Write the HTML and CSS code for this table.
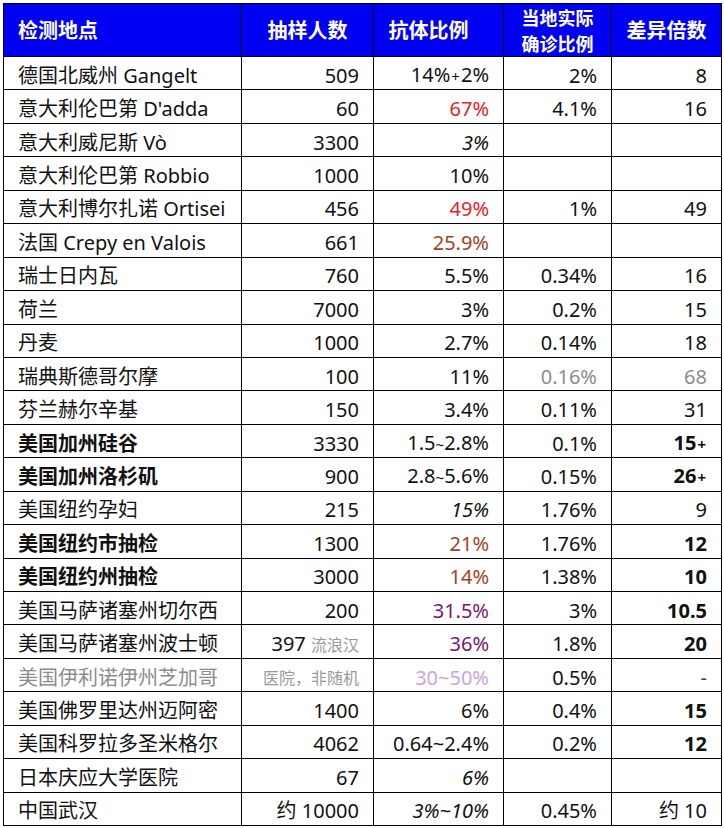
FILE: index.html
```html
<!DOCTYPE html>
<html lang="zh-CN">
<head>
<meta charset="utf-8">
<title>抗体检测</title>
<link rel="stylesheet" href="styles.css">
</head>
<body>
<table class="data">
  <colgroup>
    <col class="c1"><col class="c2"><col class="c3"><col class="c4"><col class="c5">
  </colgroup>
  <thead>
    <tr>
      <th class="left">检测地点</th>
      <th>抽样人数</th>
      <th class="shift">抗体比例</th>
      <th class="two">当地实际<br>确诊比例</th>
      <th>差异倍数</th>
    </tr>
  </thead>
  <tbody>
    <tr><td>德国北威州 Gangelt</td><td>509</td><td>14%<span class="plus">+</span>2%</td><td>2%</td><td>8</td></tr>
    <tr><td>意大利伦巴第 D'adda</td><td>60</td><td class="red">67%</td><td>4.1%</td><td>16</td></tr>
    <tr><td>意大利威尼斯 Vò</td><td>3300</td><td class="it">3%</td><td></td><td></td></tr>
    <tr><td>意大利伦巴第 Robbio</td><td>1000</td><td>10%</td><td></td><td></td></tr>
    <tr><td>意大利博尔扎诺 Ortisei</td><td>456</td><td class="red">49%</td><td>1%</td><td>49</td></tr>
    <tr><td>法国 Crepy en Valois</td><td>661</td><td class="brown">25.9%</td><td></td><td></td></tr>
    <tr><td>瑞士日内瓦</td><td>760</td><td>5.5%</td><td>0.34%</td><td>16</td></tr>
    <tr><td>荷兰</td><td>7000</td><td>3%</td><td>0.2%</td><td>15</td></tr>
    <tr><td>丹麦</td><td>1000</td><td>2.7%</td><td>0.14%</td><td>18</td></tr>
    <tr><td>瑞典斯德哥尔摩</td><td>100</td><td>11%</td><td class="gray">0.16%</td><td class="gray">68</td></tr>
    <tr><td>芬兰赫尔辛基</td><td>150</td><td>3.4%</td><td>0.11%</td><td>31</td></tr>
    <tr><td class="b">美国加州硅谷</td><td>3330</td><td>1.5<span class="tl">~</span>2.8%</td><td>0.1%</td><td class="b">15<span class="plus">+</span></td></tr>
    <tr><td class="b">美国加州洛杉矶</td><td>900</td><td>2.8<span class="tl">~</span>5.6%</td><td>0.15%</td><td class="b">26<span class="plus">+</span></td></tr>
    <tr><td>美国纽约孕妇</td><td>215</td><td class="it">15%</td><td>1.76%</td><td>9</td></tr>
    <tr><td class="b">美国纽约市抽检</td><td>1300</td><td class="brown">21%</td><td>1.76%</td><td class="b">12</td></tr>
    <tr><td class="b">美国纽约州抽检</td><td>3000</td><td class="brown">14%</td><td>1.38%</td><td class="b">10</td></tr>
    <tr><td>美国马萨诸塞州切尔西</td><td>200</td><td class="purple">31.5%</td><td>3%</td><td class="b">10.5</td></tr>
    <tr><td>美国马萨诸塞州波士顿</td><td>397 <span class="note">流浪汉</span></td><td class="purple">36%</td><td>1.8%</td><td class="b">20</td></tr>
    <tr><td class="gray">美国伊利诺伊州芝加哥</td><td><span class="note">医院，非随机</span></td><td class="lilac">30~50%</td><td>0.5%</td><td class="dash">-</td></tr>
    <tr><td>美国佛罗里达州迈阿密</td><td>1400</td><td>6%</td><td>0.4%</td><td class="b">15</td></tr>
    <tr><td>美国科罗拉多圣米格尔</td><td>4062</td><td>0.64~2.4%</td><td>0.2%</td><td class="b">12</td></tr>
    <tr><td>日本庆应大学医院</td><td>67</td><td class="it">6%</td><td></td><td></td></tr>
    <tr><td>中国武汉</td><td>约 10000</td><td class="it">3%~10%</td><td>0.45%</td><td>约 10</td></tr>
  </tbody>
</table>
</body>
</html>
```

FILE: styles.css
```css
html, body {
  margin: 0;
  padding: 0;
  background: #ffffff;
}

body {
  padding: 3px 0 0 3px;
  font-family: "Noto Sans", "Noto Sans CJK SC", sans-serif;
  color: #111111;
}

.data {
  border-collapse: collapse;
  table-layout: fixed;
  width: 718px;
}

.c1 { width: 238px; }
.c2 { width: 132px; }
.c3 { width: 130px; }
.c4 { width: 108px; }
.c5 { width: 110px; }

.data th,
.data td {
  border: 1px solid #000000;
  padding: 0 14px;
  white-space: nowrap;
  overflow: hidden;
}

.data th {
  background: #0000f2;
  color: #ffffff;
  font-family: "Noto Sans CJK SC", sans-serif;
  font-weight: 700;
  font-size: 20px;
  line-height: 26px;
  height: 52px;
  text-align: center;
  padding: 0 6px;
}

.data th.two {
  font-size: 18px;
  line-height: 26px;
}

.data th.left {
  text-align: left;
  padding-left: 14px;
}

.data th.shift {
  padding-right: 26px;
}

.data td {
  height: 33.45px;
  font-size: 20px;
  line-height: 24px;
  text-align: right;
  padding-top: 5px;
  padding-bottom: 0;
  box-sizing: border-box;
}

.data td:first-child {
  text-align: left;
}

.b { font-weight: 700; }
.it { font-style: italic; }
.red { color: #e8202a; }
.brown { color: #a04420; }
.gray { color: #8c8c8c; }
.purple { color: #7a1570; }
.lilac { color: #c9a3ea; }
.dash { color: #444444; font-size: 16px; }

.plus {
  font-size: 15px;
  padding: 0 1px;
}

.tl {
  font-size: 15px;
}

.note {
  font-size: 16px;
  color: #9a9a9a;
}
```
